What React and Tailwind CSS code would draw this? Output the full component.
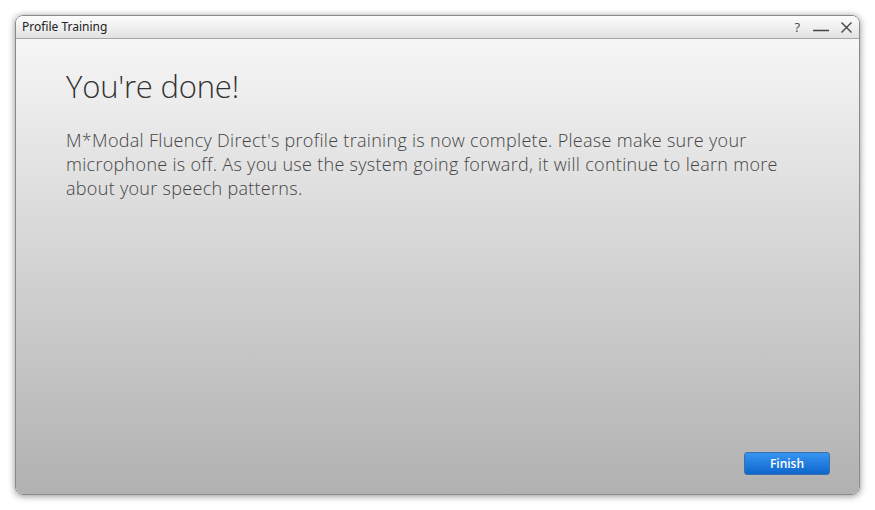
export default function App() {
  return (
    <div className="w-[875px] h-[510px] bg-white pt-[15px] pl-[15px]">
      <div
        className="w-[845px] h-[480px] flex flex-col rounded-[8px] overflow-hidden border border-[#8a8a8a] shadow-[0_1px_7px_rgba(0,0,0,0.45)]"
        style={{ fontFamily: '"Open Sans", "Noto Sans", sans-serif' }}
      >
        <div className="h-[23px] shrink-0 flex items-center justify-between pl-[6px] pr-[6px] bg-gradient-to-b from-[#fdfdfd] to-[#e2e2e2] border-b border-[#a5a5a5]">
          <span className="text-[12px] text-[#222]" style={{ fontFamily: '"Noto Sans", sans-serif' }}>
            Profile Training
          </span>
          <div className="flex items-center text-[#444]">
            <span className="text-[13px] leading-none mr-[13px]">?</span>
            <svg width="16" height="14" viewBox="0 0 16 14" className="mr-[11px]">
              <path d="M0 10.5h16" stroke="#444" strokeWidth="1.4" />
            </svg>
            <svg width="13" height="13" viewBox="0 0 13 13">
              <path d="M1.5 1.5l10 10M11.5 1.5l-10 10" stroke="#444" strokeWidth="1.4" />
            </svg>
          </div>
        </div>
        <div className="flex-1 flex flex-col bg-gradient-to-b from-[#f6f6f6] to-[#b1b1b1] pl-[50px] pr-[29px]">
          <h1 className="mt-[27px] text-[31px] font-light text-[#333] leading-[40px] tracking-[-0.2px]">
            You're done!
          </h1>
          <p className="mt-[22px] text-[18px] font-light text-[#444] leading-[24px] tracking-[0.3px]">
            M*Modal Fluency Direct's profile training is now complete. Please make sure your
            <br />
            microphone is off. As you use the system going forward, it will continue to learn more
            <br />
            about your speech patterns.
          </p>
          <div className="mt-auto mb-[19px] flex justify-end">
            <button className="w-[86px] h-[23px] rounded-[3px] border border-[#3f6fa8] bg-gradient-to-b from-[#3695f2] to-[#0d66cc] text-white text-[12px] font-semibold">
              Finish
            </button>
          </div>
        </div>
      </div>
    </div>
  );
}
